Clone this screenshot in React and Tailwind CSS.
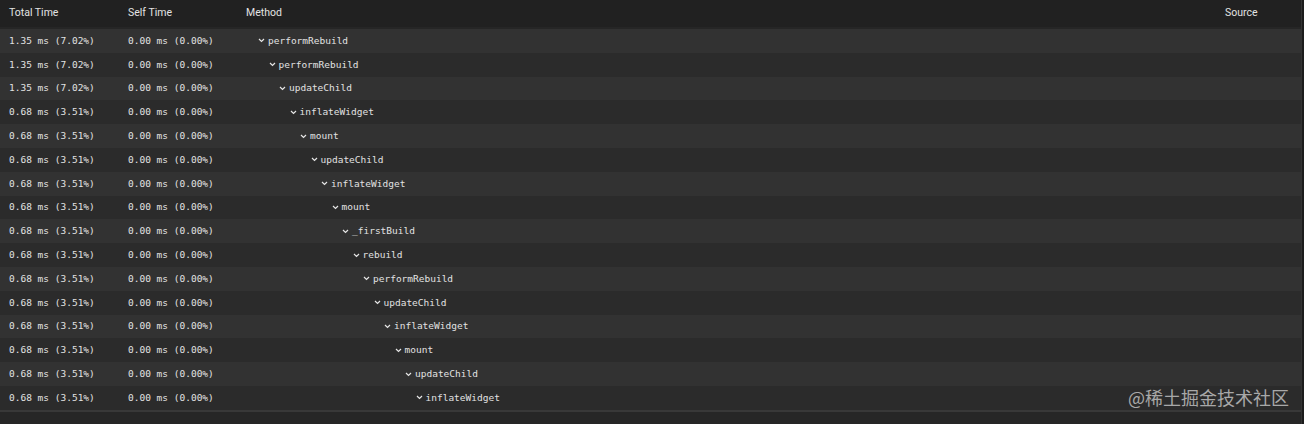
import React from "react";

const rows = [
  ["1.35 ms (7.02%)", "performRebuild", 0],
  ["1.35 ms (7.02%)", "performRebuild", 1],
  ["1.35 ms (7.02%)", "updateChild", 2],
  ["0.68 ms (3.51%)", "inflateWidget", 3],
  ["0.68 ms (3.51%)", "mount", 4],
  ["0.68 ms (3.51%)", "updateChild", 5],
  ["0.68 ms (3.51%)", "inflateWidget", 6],
  ["0.68 ms (3.51%)", "mount", 7],
  ["0.68 ms (3.51%)", "_firstBuild", 8],
  ["0.68 ms (3.51%)", "rebuild", 9],
  ["0.68 ms (3.51%)", "performRebuild", 10],
  ["0.68 ms (3.51%)", "updateChild", 11],
  ["0.68 ms (3.51%)", "inflateWidget", 12],
  ["0.68 ms (3.51%)", "mount", 13],
  ["0.68 ms (3.51%)", "updateChild", 14],
  ["0.68 ms (3.51%)", "inflateWidget", 15],
];

function Chevron() {
  return (
    <svg width="7" height="5" viewBox="0 0 7 5" className="shrink-0">
      <path d="M1 1 L3.5 3.5 L6 1" stroke="#e6e6e6" strokeWidth="1.2" fill="none" />
    </svg>
  );
}

export default function App() {
  return (
    <div className="relative w-[1304px] h-[424px] bg-[#262626] overflow-hidden flex">
      <div className="flex-1 flex flex-col">
        <div className="h-[27px] bg-[#212121] flex items-start pt-[5px] text-[10.5px] text-[#e3e3e3] font-['Roboto',sans-serif]">
          <div className="w-[128px] pl-[9px]">Total Time</div>
          <div className="w-[118px]">Self Time</div>
          <div className="flex-1">Method</div>
          <div className="w-[76px]">Source</div>
        </div>
        <div className="h-[2px]" />
        <div className="flex flex-col font-['DejaVu_Sans_Mono',monospace] text-[9.5px] text-[#e2e2e2]">
          {rows.map(([t, m, d], i) => (
            <div
              key={i}
              className={`h-[23.8px] flex items-center ${i % 2 === 0 ? "bg-[#323232]" : "bg-[#2b2b2b]"}`}
            >
              <div className="w-[128px] pl-[9px]">{t}</div>
              <div className="w-[118px]">0.00 ms (0.00%)</div>
              <div className="flex-1 flex items-center">
                <div style={{ width: 12 + d * 10.5 }} className="shrink-0" />
                <Chevron />
                <span className="ml-[3px]">{m}</span>
              </div>
            </div>
          ))}
        </div>
        <div className="h-[2px] bg-[#383838]" />
      </div>
      <div className="w-[3px] bg-[#1c1c1c] border-l border-[#333]" />
      <div className="absolute left-[1128px] top-[386px] text-[18px] leading-[22px] text-[#a8a8a8] font-['Noto_Sans_CJK_SC',sans-serif]">
        @稀土掘金技术社区
      </div>
    </div>
  );
}
